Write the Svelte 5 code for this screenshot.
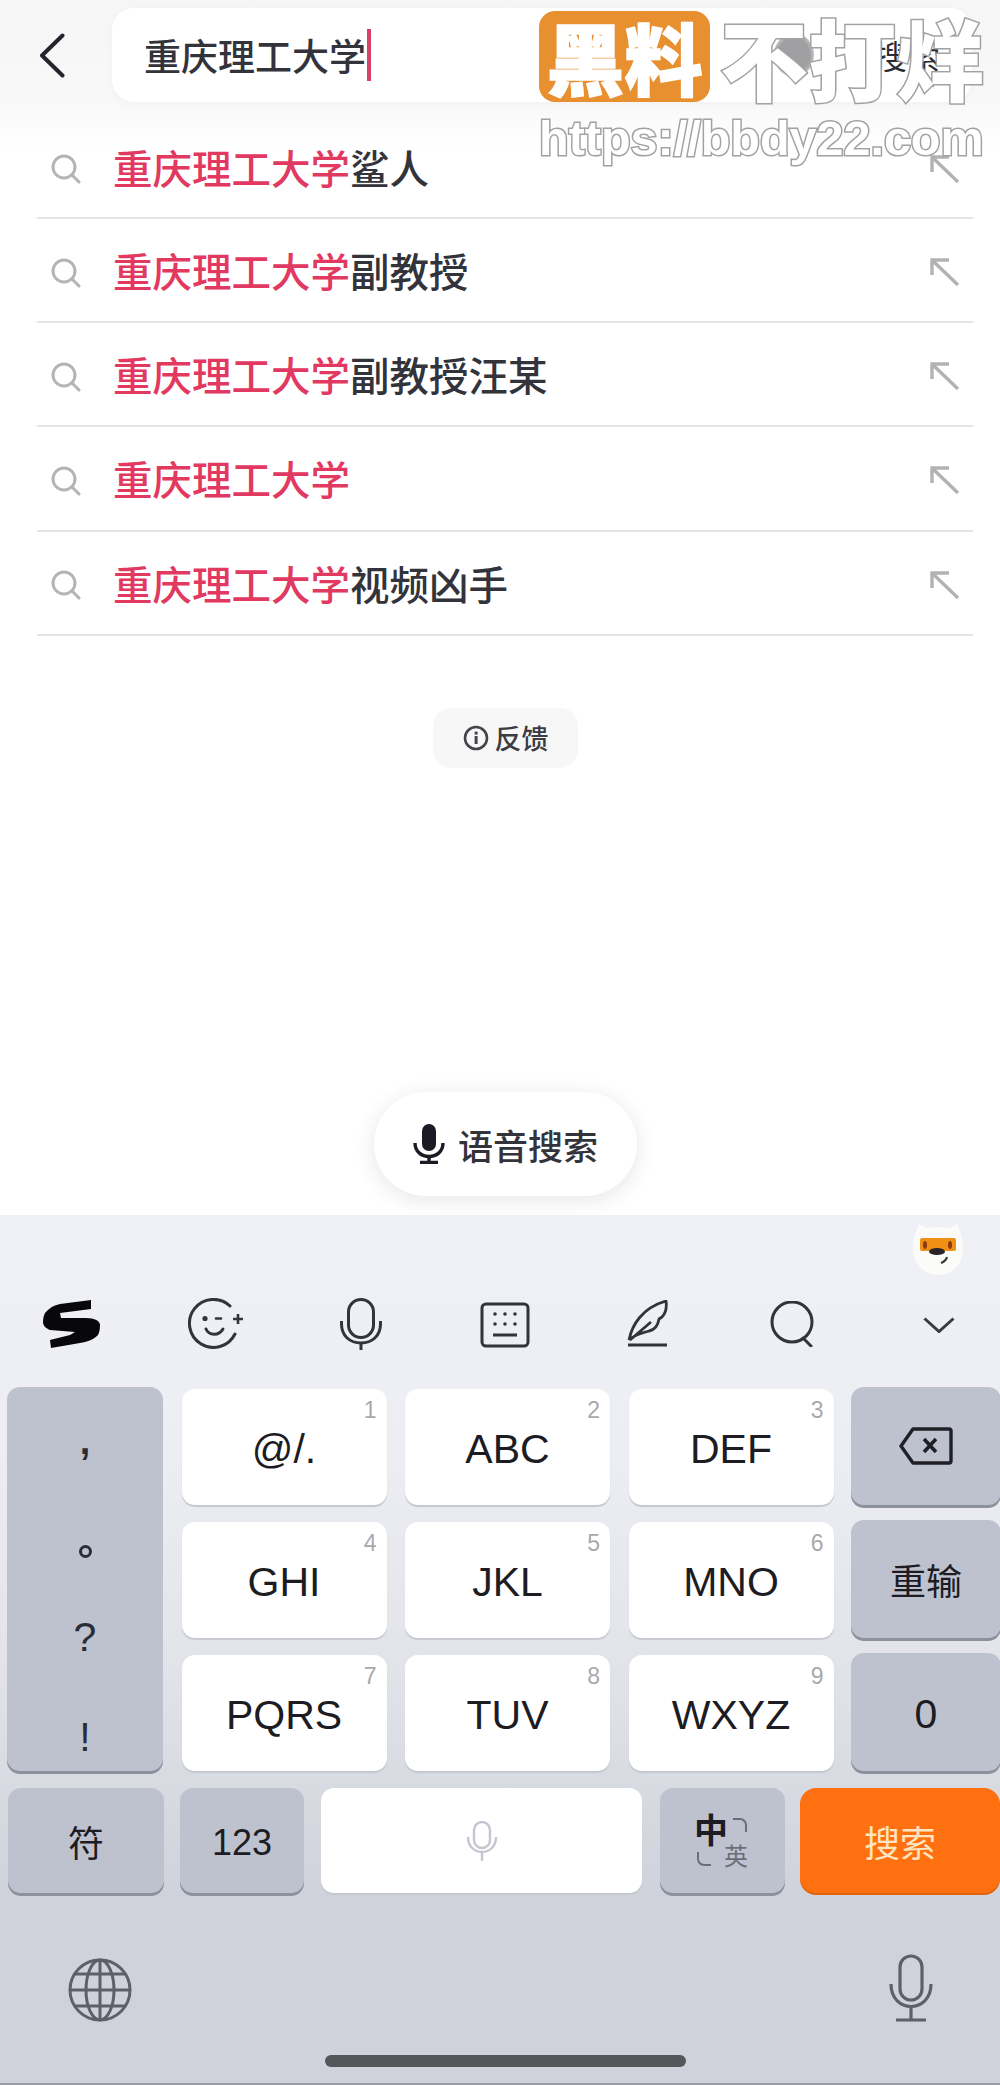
<script>
  const suggestions = [
    { tail: '鲨人' },
    { tail: '副教授' },
    { tail: '副教授汪某' },
    { tail: '' },
    { tail: '视频凶手' }
  ];
  const grid = [
    { label: '@/.', num: '1' },
    { label: 'ABC', num: '2' },
    { label: 'DEF', num: '3' },
    { label: 'GHI', num: '4' },
    { label: 'JKL', num: '5' },
    { label: 'MNO', num: '6' },
    { label: 'PQRS', num: '7' },
    { label: 'TUV', num: '8' },
    { label: 'WXYZ', num: '9' }
  ];
</script>

<div class="page">
  <header class="top">
    <svg class="back" width="26" height="45" viewBox="0 0 26 45"><path d="M23.5 2.5 L3 22.5 L23.5 42.5" fill="none" stroke="#24242c" stroke-width="4" stroke-linecap="round" stroke-linejoin="round"/></svg>
    <div class="searchbox">
      <span class="query">重庆理工大学</span><span class="caret"></span>
      <span class="grow"></span>
      <span class="blob"></span>
      <span class="go">搜索</span>
    </div>
  </header>

  <ul class="list">
    {#each suggestions as s}
      <li class="row">
        <svg class="mag" width="32" height="30" viewBox="0 0 32 30"><circle cx="14" cy="13" r="11" fill="none" stroke="#b4b4b6" stroke-width="3"/><path d="M22 21 L29 28" stroke="#b4b4b6" stroke-width="3" stroke-linecap="round"/></svg>
        <span class="sug"><em>重庆理工大学</em>{s.tail}</span>
        <svg class="arrow" width="30" height="29" viewBox="0 0 30 29"><path d="M2 17 V2 H19 M3 3 L28 27" fill="none" stroke="#b2b2b4" stroke-width="3.4"/></svg>
      </li>
    {/each}
  </ul>

  <div class="feedback-wrap">
    <div class="feedback">
      <svg width="26" height="26" viewBox="0 0 26 26"><circle cx="13" cy="13" r="11" fill="none" stroke="#44444a" stroke-width="2.6"/><rect x="11.6" y="11" width="3" height="8" fill="#44444a"/><rect x="11.6" y="6.6" width="3" height="3" fill="#44444a"/></svg>
      <span>反馈</span>
    </div>
  </div>

  <div class="voice-wrap">
    <div class="voice">
      <svg width="32" height="40" viewBox="0 0 32 40"><rect x="9" y="0" width="14" height="27" rx="7" fill="#1b1b25"/><path d="M2 19 C2 37 30 37 30 19" fill="none" stroke="#1b1b25" stroke-width="3.4"/><path d="M16 32 V38 M7 38.5 H25" stroke="#1b1b25" stroke-width="3.4"/></svg>
      <span>语音搜索</span>
    </div>
  </div>

  <section class="kb">
    <div class="mascot-row">
      <svg class="mascot" width="50" height="52" viewBox="0 0 50 52">
        <path d="M25 52 C10 52 0 40 0 26 C0 16 3 8 6 1 C8 3 13 5 16 5 C20 4 30 4 34 5 C37 5 42 3 44 1 C47 8 50 16 50 26 C50 40 40 52 25 52Z" fill="#fbfbfa"/>
        <path d="M7 17 Q7 15 9 15 H41 Q43 15 43 17 V26 Q43 28 41 28 H33 Q25 25 17 28 H9 Q7 28 7 26Z" fill="#ef9015"/>
        <ellipse cx="12" cy="22" rx="2" ry="4" fill="#8b3a12"/><ellipse cx="37" cy="22" rx="2" ry="4" fill="#8b3a12"/>
        <ellipse cx="24" cy="28.5" rx="8" ry="3.6" fill="#2b2326"/>
        <path d="M34 34 C33 38 30 39 28 40" fill="none" stroke="#3a3a3a" stroke-width="2.2"/>
      </svg>
    </div>

    <div class="tools">
      <svg class="t-s" width="58" height="48" viewBox="0 0 58 48"><path d="M48 0 V9 L17 13 L18 18 H43 C52 18 57 21 57 25 C57 30 56 33 55 35 C50 40 44 42 37 43 L8 48 L7 40 L27 35 L32 32 L7 30 C2 28 0 25 0 22 C0 18 1 15 2 13 C6 8 11 5 17 4Z" fill="#08080a"/></svg>
      <svg class="t-face" width="56" height="54" viewBox="0 0 56 54"><path d="M42 8 A24 24 0 1 0 47 36" fill="none" stroke="#33333a" stroke-width="3" stroke-linecap="round"/><circle cx="17" cy="20.5" r="2.6" fill="#33333a"/><path d="M28 20.5 H33" stroke="#33333a" stroke-width="2.6" stroke-linecap="round"/><path d="M18 31 C21 38 31 38 35 31" fill="none" stroke="#33333a" stroke-width="3" stroke-linecap="round"/><path d="M50 16 V26 M45 21 H55" stroke="#33333a" stroke-width="2.6"/></svg>
      <svg class="t-mic" width="42" height="52" viewBox="0 0 42 52"><rect x="8.5" y="1.5" width="25" height="38" rx="12.5" fill="none" stroke="#33333a" stroke-width="3"/><path d="M1.5 23 V26 C1.5 38 10 45 21 45 C32 45 40.5 38 40.5 26 V23" fill="none" stroke="#33333a" stroke-width="3"/><path d="M21 45 V52" stroke="#33333a" stroke-width="3"/></svg>
      <svg class="t-kbd" width="50" height="46" viewBox="0 0 50 46"><rect x="2" y="2" width="46" height="42" rx="4" fill="none" stroke="#33333a" stroke-width="3"/><g fill="#33333a"><circle cx="15" cy="12" r="1.8"/><circle cx="25" cy="12" r="1.8"/><circle cx="35" cy="12" r="1.8"/><circle cx="15" cy="22" r="1.8"/><circle cx="25" cy="22" r="1.8"/><circle cx="35" cy="22" r="1.8"/></g><path d="M13 33 H37" stroke="#33333a" stroke-width="3"/></svg>
      <svg class="t-pen" width="42" height="48" viewBox="0 0 42 48"><path d="M2 40 C5 25 15 8 39 1 C40 8 38 14 35 17 L32 19 C31 25 28 30 22 31 C14 33 6 36 2 40 M3 40 L24 22" fill="none" stroke="#33333a" stroke-width="2.8" stroke-linejoin="round"/><path d="M1 45 H40" stroke="#33333a" stroke-width="3"/></svg>
      <svg class="t-search" width="46" height="46" viewBox="0 0 46 46"><circle cx="22" cy="21" r="20" fill="none" stroke="#33333a" stroke-width="3"/><path d="M33 37 L41 45" stroke="#33333a" stroke-width="3" stroke-linecap="round"/></svg>
      <svg class="t-chev" width="32" height="16" viewBox="0 0 32 16"><path d="M1.5 1.5 L16 14.5 L30.5 1.5" fill="none" stroke="#3a3a42" stroke-width="3"/></svg>
    </div>

    <div class="keys">
      <div class="key gray punct">
        <span class="p-comma">,</span><span class="p-dot"><i></i></span><span class="p-q">?</span><span class="p-ex">!</span>
      </div>
      {#each grid as k, i}
        <div class="key white" style={`grid-column:${(i % 3) + 2};grid-row:${Math.floor(i / 3) + 1}`}>
          <span class="num">{k.num}</span>
          <span class="lab">{k.label}</span>
        </div>
      {/each}
      <div class="key gray side" style="grid-column:5;grid-row:1">
        <svg width="54" height="38" viewBox="0 0 54 38"><path d="M14 2 H50 Q52 2 52 4 V34 Q52 36 50 36 H14 L2 19Z" fill="none" stroke="#1f1f26" stroke-width="3.4" stroke-linejoin="round"/><path d="M25 12 L37 25 M37 12 L25 25" stroke="#1f1f26" stroke-width="3.6"/></svg>
      </div>
      <div class="key gray side cjk" style="grid-column:5;grid-row:2">重输</div>
      <div class="key gray side lab" style="grid-column:5;grid-row:3">0</div>
    </div>

    <div class="bottom-keys">
      <div class="key gray b1 cjk">符</div>
      <div class="key gray b2 lab2">123</div>
      <div class="key white b3">
        <svg width="32" height="40" viewBox="0 0 32 40"><rect x="8" y="1" width="16" height="26" rx="8" fill="none" stroke="#c5c6d2" stroke-width="2.4"/><path d="M2 16 C2 36 30 36 30 16" fill="none" stroke="#c5c6d2" stroke-width="2.4"/><path d="M16 32 V40" stroke="#c5c6d2" stroke-width="2.4"/></svg>
      </div>
      <div class="key gray b4">
        <span class="zh">中</span><span class="en">英</span>
        <i class="br tr"></i><i class="br bl"></i>
      </div>
      <div class="key orange b5">搜索</div>
    </div>

    <div class="sys">
      <svg class="globe" width="64" height="64" viewBox="0 0 64 64"><g fill="none" stroke="#5d6068" stroke-width="3"><circle cx="32" cy="32" r="30"/><ellipse cx="32" cy="32" rx="14" ry="30"/><path d="M32 2 V62 M2 32 H62 M7 16 H57 M7 48 H57"/></g></svg>
      <svg width="44" height="68" viewBox="0 0 44 68"><g fill="none" stroke="#5d6068" stroke-width="3.2"><rect x="11" y="2" width="22" height="44" rx="11"/><path d="M2 30 C2 60 42 60 42 30"/><path d="M22 53 V65 M7 66 H37"/></g></svg>
    </div>
    <div class="home"><span></span></div>
  </section>

  <div class="mark">
    <div class="mark-top">
      <span class="badge">黑料</span>
      <span class="outline big">不打烊</span>
    </div>
    <div class="outline url">https://bbdy22.com</div>
  </div>
</div>

<style>
  :global(body) { margin: 0; background: #fff; }
  .page {
    position: relative;
    width: 1000px;
    height: 2085px;
    overflow: hidden;
    display: flex;
    flex-direction: column;
    background: linear-gradient(#f6f6f7 0, #f8f8f9 100px, #fff 150px);
    font-family: "Noto Sans CJK SC", "Liberation Sans", sans-serif;
    color: #2b2b33;
  }
  .top {
    height: 116px;
    box-sizing: border-box;
    padding: 8px 28px 14px 39px;
    display: flex;
    gap: 47px;
    flex: none;
  }
  .back { margin-top: 25px; flex: none; }
  .searchbox {
    flex: 1;
    height: 94px;
    background: #fff;
    border-radius: 22px;
    display: flex;
    align-items: center;
    padding-left: 32px;
    padding-right: 32px;
    box-shadow: 0 2px 8px rgba(0, 0, 0, 0.03);
  }
  .query { font-size: 37px; line-height: 46px; color: #33333c; font-weight: 500; }
  .caret { width: 4px; height: 52px; background: #d9416a; margin-left: 1px; }
  .grow { flex: 1; }
  .blob { width: 40px; height: 44px; border-radius: 50%; background: radial-gradient(#a0a0a3 55%, rgba(160, 160, 163, 0)); margin-right: 60px; }
  .go { font-size: 33px; color: #2b2b33; }

  .list { list-style: none; margin: 0; padding: 0 27px 0 37px; flex: none; }
  .row {
    height: 104.2px;
    box-sizing: border-box;
    display: flex;
    align-items: center;
    border-bottom: 2px solid #e4e4e6;
    padding-right: 13px;
    padding-left: 13px;
  }
  .row:first-child { height: 103px; }
  .mag { flex: none; margin-right: 31px; margin-top: 5px; }
  .sug { flex: 1; font-size: 39.5px; line-height: 50px; color: #33333b; font-weight: 500; }
  .sug em { font-style: normal; color: #e1395f; }
  .arrow { flex: none; margin-top: 5px; }

  .feedback-wrap { display: flex; justify-content: center; padding-top: 72px; flex: none; padding-left: 11px; }
  .feedback {
    width: 145px;
    height: 60px;
    border-radius: 18px;
    background: #f7f7f8;
    display: flex;
    align-items: center;
    justify-content: center;
    gap: 6px;
    font-size: 27px;
    font-weight: 500;
    color: #3c3c42;
  }
  .voice-wrap { flex: 1; display: flex; justify-content: center; align-items: flex-end; padding-bottom: 19px; padding-left: 11px; }
  .voice {
    width: 263px;
    height: 104px;
    border-radius: 52px;
    background: #fff;
    box-shadow: 0 4px 22px rgba(0, 0, 0, 0.1);
    display: flex;
    align-items: center;
    justify-content: center;
    gap: 13px;
    font-size: 35px;
    font-weight: 500;
    color: #33333c;
  }

  .kb {
    flex: none;
    height: 870px;
    background: linear-gradient(#f0f1f6 0, #eceef3 27%, #e2e4ea 51%, #d9dbe2 65%, #cfd2db 79%, #cfd2db 100%);
    border-bottom: 2px solid #9a9ca3;
    box-sizing: border-box;
    position: relative;
  }
  .mascot-row { height: 62px; display: flex; justify-content: flex-end; padding-right: 37px; padding-top: 8px; box-sizing: border-box; }
  .tools { height: 110px; position: relative; }
  .tools svg { position: absolute; }
  .t-s { left: 43px; top: 23px; }
  .t-face { left: 188px; top: 21px; }
  .t-mic { left: 340px; top: 21px; }
  .t-kbd { left: 480px; top: 25px; }
  .t-pen { left: 627px; top: 23px; }
  .t-search { left: 770px; top: 24px; }
  .t-chev { left: 923px; top: 40px; }

  .keys {
    display: grid;
    grid-template-columns: 156px 205px 205px 205px 153px;
    column-gap: 18.5px;
    grid-template-rows: 118px 118px 118px;
    row-gap: 15px;
    padding-left: 7px;
    width: 1060px;
  }
  .key { border-radius: 13px; box-sizing: border-box; display: flex; align-items: center; justify-content: center; position: relative; color: #1c1c22; }
  .gray { background: #bec2cf; box-shadow: 0 3px 0 #8d919e; }
  .white { background: #fff; box-shadow: 0 2px 1px #c6c8d0; margin-top: 2px; height: 116px; padding-top: 5px; }
  .orange { background: #ff7010; box-shadow: 0 2px 0 #e0640e; color: #ffe4c0; font-size: 36px; border-radius: 16px; }
  .punct {
    grid-column: 1;
    grid-row: 1 / span 3;
    flex-direction: column;
    justify-content: flex-start;
    font-size: 41px;
    font-family: "Liberation Sans", sans-serif;
    color: #2b2d36;
  }
  .punct span { display: flex; align-items: center; justify-content: center; flex: none; }
  .p-comma { height: 108px; font-weight: 700; font-size: 38px; }
  .p-dot { height: 112px; }
  .p-dot i { width: 7px; height: 7px; border: 3px solid #2b2d36; border-radius: 50%; }
  .p-q { height: 60px; }
  .p-ex { height: 70px; margin-top: 35px; }
  .side { width: 150px; margin-left: -1px; }
  .gray.side.lab { padding-top: 5px; }
  .num { position: absolute; top: 8px; right: 10px; font-size: 23px; color: #a9a9ad; font-family: "Liberation Sans", sans-serif; }
  .lab, .lab2 { font-family: "Liberation Sans", sans-serif; font-size: 41px; color: #1c1c22; }
  .lab2 { font-size: 36px; padding-top: 4px; }
  .cjk { font-size: 36px; }
  .bottom-keys { display: flex; margin-top: 17px; height: 105px; padding-left: 8px; }
  .bottom-keys .key { flex: none; }
  .b1 { width: 156px; margin-right: 16px; }
  .b2 { width: 124px; margin-right: 17px; }
  .b3 { width: 321px; margin-right: 18px; height: 105px; margin-top: 0; padding-top: 0; }
  .b4 { width: 125px; margin-right: 15px; }
  .b5 { width: 200px; }
  .zh { position: absolute; left: 34px; top: 21px; font-size: 34px; font-weight: 700; line-height: 40px; }
  .en { position: absolute; left: 64px; top: 52px; font-size: 24px; line-height: 30px; color: #6b6e78; }
  .br { position: absolute; width: 14px; height: 14px; border: 2px solid #6b6e78; box-sizing: border-box; }
  .br.tr { left: 73px; top: 30px; border-left: 0; border-bottom: 0; border-radius: 0 7px 0 0; }
  .br.bl { left: 37px; top: 64px; border-right: 0; border-top: 0; border-radius: 0 0 0 7px; }
  .sys { display: flex; justify-content: space-between; align-items: center; padding: 61px 67px 0 68px; height: 68px; }
  .globe { margin-top: 3px; }
  .home { display: flex; justify-content: center; padding-top: 33px; padding-left: 11px; }
  .home span { width: 361px; height: 12px; border-radius: 6px; background: #55565a; }

  .mark { position: absolute; left: 539px; top: 10px; width: 450px; }
  .mark-top { display: flex; align-items: center; gap: 10px; height: 92px; }
  .badge {
    width: 171px;
    height: 91px;
    border-radius: 16px;
    background: #e88f2f;
    color: #fff;
    font-size: 78px;
    font-weight: 900;
    line-height: 91px;
    text-align: center;
    flex: none;
    -webkit-text-stroke: 1.5px #fff;
  }
  .outline {
    color: #fff;
    -webkit-text-stroke: 3px #a2a2a2;
    paint-order: stroke fill;
  }
  .big { font-size: 88px; line-height: 92px; font-weight: 900; white-space: nowrap; }
  .url {
    margin-top: 11px;
    font-family: "Liberation Sans", sans-serif;
    font-size: 48.5px;
    font-weight: 700;
    line-height: 50px;
    white-space: nowrap;
  }
</style>
